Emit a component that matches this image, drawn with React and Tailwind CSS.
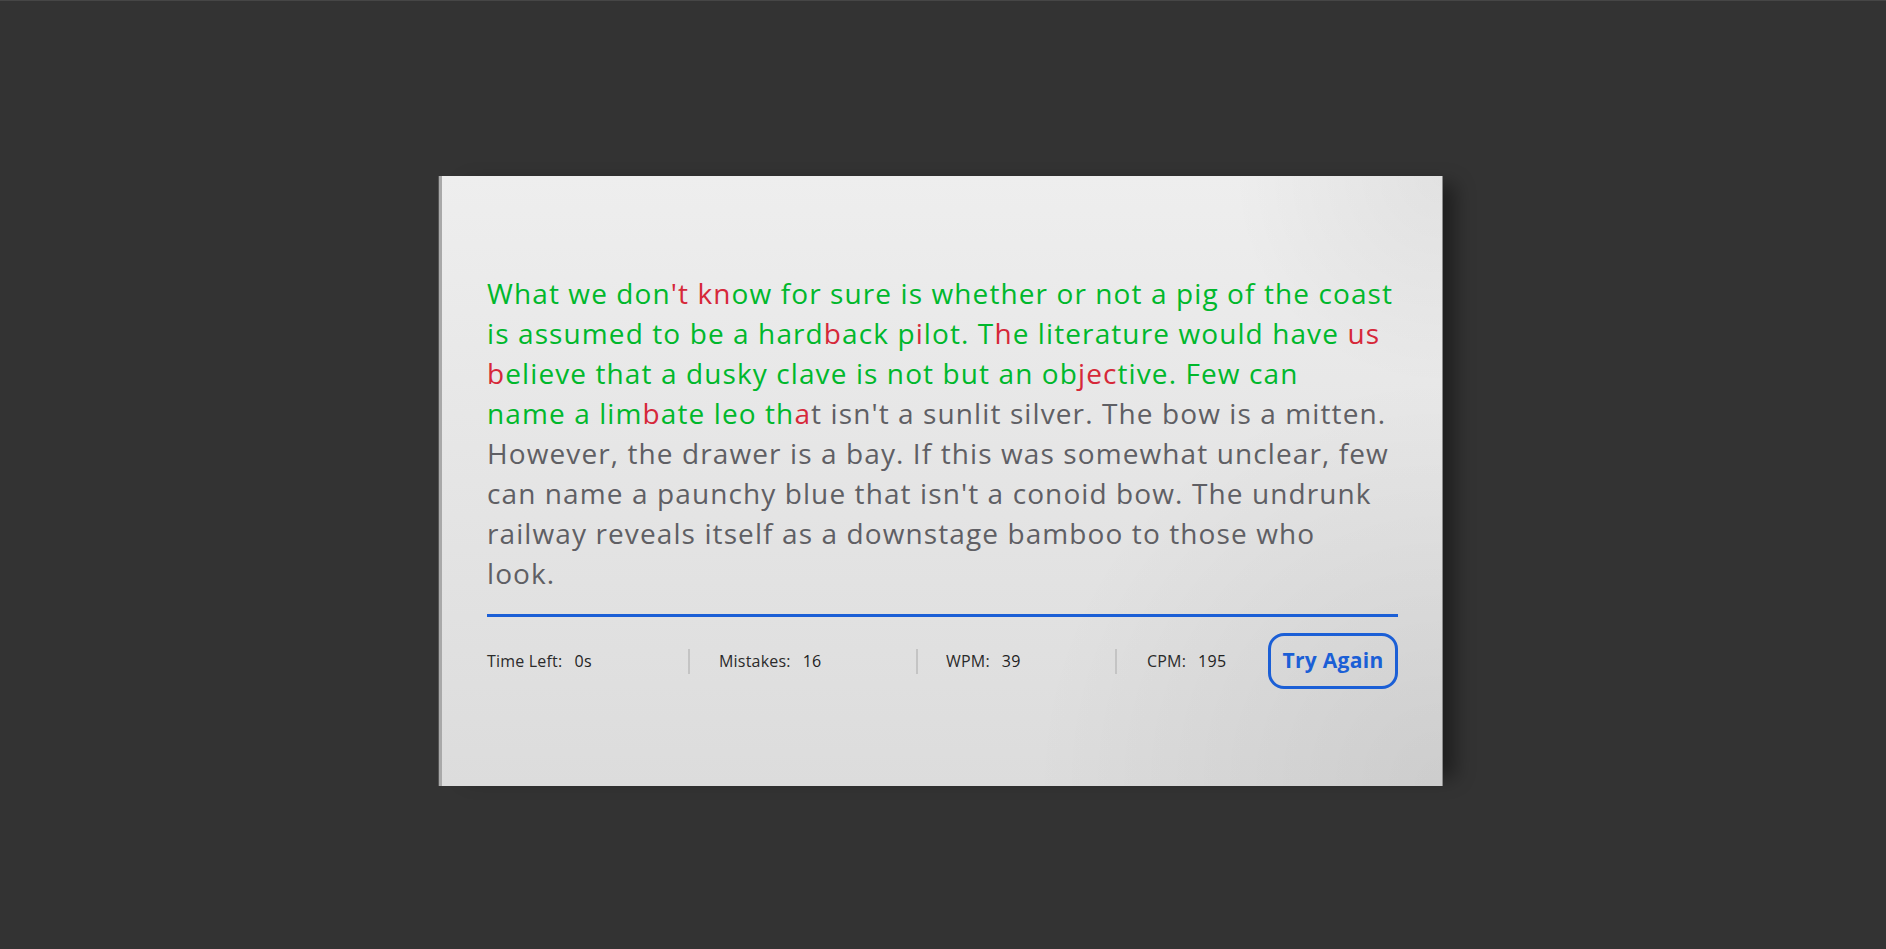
import { useState } from "react";

// typed text segments: c = correct, w = wrong, p = pending
// "\n" marks where the line wraps in the original layout
const SEGMENTS = [
  ["What we don", "c"],
  ["'t kn", "w"],
  ["ow for sure is whether or not a pig of the coast is assumed to be a hard", "c"],
  ["b", "w"],
  ["ack p", "c"],
  ["i", "w"],
  ["lot. T", "c"],
  ["h", "w"],
  ["e literature would have ", "c"],
  ["us", "w"],
  [" ", "c"],
  ["b", "w"],
  ["elieve that a dusky clave is not but an ob", "c"],
  ["jec", "w"],
  ["tive. Few can\nname a lim", "c"],
  ["b", "w"],
  ["ate leo th", "c"],
  ["a", "w"],
  [
    "t isn't a sunlit silver. The bow is a mitten. However, the drawer is a bay. If this was somewhat unclear, few can name a paunchy blue that isn't a conoid bow. The undrunk railway reveals itself as a downstage bamboo to those who\nlook.",
    "p",
  ],
];

const COLORS = {
  c: "text-[#00b82c]",
  w: "text-[#d62839]",
  p: "text-[#5f5f64]",
};

function Stat({ label, value, className }) {
  return (
    <li className={`flex items-center gap-[12px] h-[25px] ${className}`}>
      <span className="text-[16px] tracking-[0.2px] text-[#2b2b2b]">{label}</span>
      <span className="text-[16px] tracking-[0.3px] font-medium text-[#222]">{value}</span>
    </li>
  );
}

export default function App() {
  const [stats] = useState({ time: "0s", mistakes: 16, wpm: 39, cpm: 195 });

  return (
    <div
      className="min-h-screen bg-[#333333] border-t border-[#464646] flex justify-center pt-[175px] pr-[4px]"
      style={{ fontFamily: "'Open Sans', 'Noto Sans', sans-serif" }}
    >
      <div className="w-[1004px] h-[610px] border-l-[3px] border-l-[#a9a9a9] border-r border-r-[#8a8a8a] shadow-[-1px_0_0_#555,20px_0_18px_-8px_rgba(0,0,0,0.4)] bg-[radial-gradient(circle_at_100%_100%,rgba(0,0,0,0.07),transparent_35%),radial-gradient(circle_at_100%_0%,rgba(0,0,0,0.05),transparent_18%),linear-gradient(to_bottom,#eeeeee,#dcdcdc)] pt-[97px] pl-[45px] pr-[44px]">
        {/* typing text */}
        <p className="text-[28px] leading-[40px] tracking-[1.1px] whitespace-pre-line break-words">
          {SEGMENTS.map(([text, st], i) => (
            <span key={i} className={COLORS[st]}>
              {text}
            </span>
          ))}
        </p>

        <div className="mt-[21px] h-[3px] bg-[#1b5fd6]" />

        {/* stats */}
        <div className="mt-[16px] flex items-center">
          <ul className="flex items-center">
            <Stat label="Time Left:" value={stats.time} className="w-[203px] border-r-2 border-[#c4c4c4]" />
            <Stat label="Mistakes:" value={stats.mistakes} className="w-[228px] pl-[29px] border-r-2 border-[#c4c4c4]" />
            <Stat label="WPM:" value={stats.wpm} className="w-[199px] pl-[28px] border-r-2 border-[#c4c4c4]" />
            <Stat label="CPM:" value={stats.cpm} className="pl-[30px]" />
          </ul>
          <button className="ml-auto w-[130px] h-[56px] rounded-[16px] border-[3px] border-[#1b5fd6] text-[#1b5fd6] text-[21px] tracking-[0.3px] font-bold">
            Try Again
          </button>
        </div>
      </div>
    </div>
  );
}
